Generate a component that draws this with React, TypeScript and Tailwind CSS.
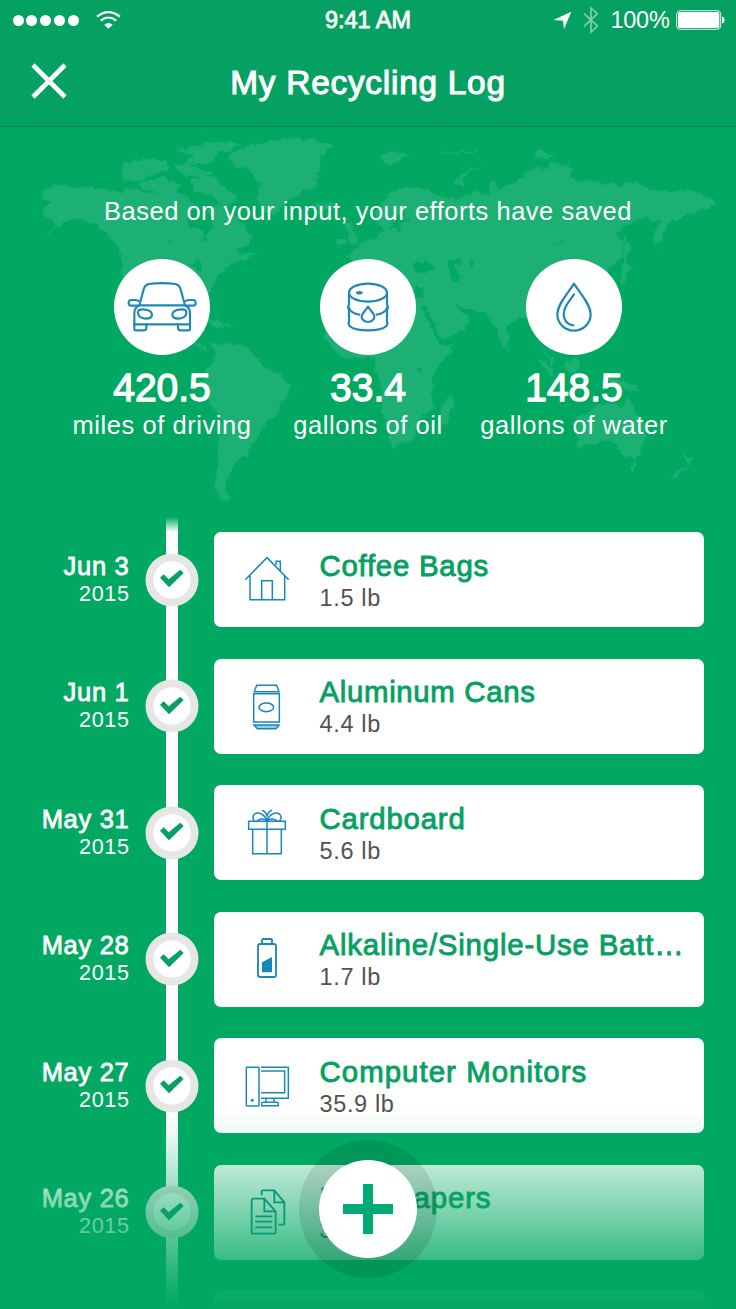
import type { ReactNode } from "react";

const FONT = "font-['Liberation_Sans',Arial,sans-serif]";

function WorldMap() {
  return (
    <svg className="pointer-events-none absolute inset-0" width="736" height="390" viewBox="0 127 736 390" aria-hidden="true">
      <defs>
        <filter id="coast" x="-5%" y="-5%" width="110%" height="110%">
          <feTurbulence type="fractalNoise" baseFrequency="0.12" numOctaves="3" seed="4" result="n" />
          <feDisplacementMap in="SourceGraphic" in2="n" scale="9" xChannelSelector="R" yChannelSelector="G" />
        </filter>
      </defs>
      <g filter="url(#coast)">
        <g transform="translate(20 130) scale(.33333)" fill="#1bb074">
          <path d="M75 180L120 163 180 172 240 178 300 185 330 175 400 190 440 182 480 190 505 205 530 225 520 245 495 265 505 290 545 300 550 335 562 330 570 290 580 262 555 240 600 225 650 260 690 320 690 345 640 365 715 370 680 385 640 400 600 430 575 470 570 500 540 520 500 540 480 620 545 645 565 662 520 650 400 600 310 480 305 380 270 320 230 285 180 262 140 275 70 325 110 285 80 265 65 235 90 215 60 205Z" />
          <path d="M305 100L360 85 440 95 445 125 400 130 370 150 310 155ZM350 160L430 140 480 165 470 188 400 186ZM455 100L510 105 580 125 560 145 490 135ZM510 150L570 140 615 165 650 200 625 235 595 222 575 195 520 182ZM470 60L560 40 650 35 670 45 600 70 560 105 500 100 520 75Z" />
          <path d="M620 75L700 45 800 25 880 30 940 50 905 80 890 130 890 170 850 185 800 210 765 260 735 245 710 210 720 160 690 120 640 105Z" />
          <path d="M880 215L930 218 940 235 900 248ZM970 285L990 275 1005 320 1017 340 985 348 990 310ZM955 325L975 320 975 340 958 345ZM560 570L600 575 640 590 600 592Z" />
          <path d="M580 640L620 640 680 650 720 690 730 715 780 730 815 765 790 810 780 855 735 880 715 920 690 950 685 975 655 985 640 1020 625 1040 615 1075 620 1100 635 1114 600 1108 583 1060 595 1000 598 930 605 870 565 810 550 770 555 730 580 690Z" />
          <path d="M510 402L540 395 550 415 530 425ZM445 325L460 345 450 340Z" fill="#01a862" />
        </g>
        <g transform="translate(360 130) scale(.33333)" fill="#1bb074">
          <path d="M-40 378L0 345 40 325 70 300 50 275 45 245 90 190 130 165 200 180 240 200 300 210 350 180 385 195 390 155 405 148 410 180 470 155 500 125 590 100 640 115 630 145 700 155 780 165 810 155 880 180 960 185 1000 180 1070 215 1050 235 1000 250 940 270 915 290 905 320 885 350 880 320 905 275 860 265 820 275 765 310 795 345 785 380 755 410 740 430 700 500 640 600 500 570 480 560 440 590 445 645 430 655 400 575 375 545 320 540 270 510 300 545 330 560 310 600 245 630 190 525 240 645 280 640 275 670 220 720 215 810 220 840 185 860 165 910 140 940 95 950 85 915 60 820 70 780 45 720 45 680 -40 685 -80 660 -105 620 -105 580 -60 500 0 400Z" />
          <path d="M270 800L278 825 260 880 245 885 245 840ZM535 680L560 700 585 735 575 742 550 715ZM610 700L650 680 665 700 650 730 625 732ZM560 660L580 690 575 710ZM740 735L780 745 835 782 800 782 760 765Z" />
          <path d="M645 880L650 860 690 845 720 820 760 815 785 835 800 800 825 840 855 890 858 920 840 960 830 985 795 980 770 945 740 930 690 945 648 950 650 920ZM810 1000L830 1002 822 1022ZM975 955L985 980 1005 985 985 1000 950 1045 935 1040 975 1005Z" />
          <path d="M793 320L807 340 802 400 817 410 800 420 793 465 780 472 788 420ZM60 75L100 65 150 75 110 95 80 108ZM285 160L300 130 375 105 330 125 305 150 310 168ZM515 75L545 60 585 75 560 88ZM440 640L455 660 445 670ZM235 64L290 66 360 58 360 66 290 72Z" />
          <path d="M155 400L190 390 225 410 215 425 170 425ZM262 395L290 385 300 400 285 410 300 440 295 458 275 450 265 420ZM325 392L342 392 340 408 325 408ZM165 470L195 470 190 500 165 500ZM172 715L188 715 186 732 172 732ZM580 350L615 320 612 330ZM85 300L100 275 130 235 140 240 125 270 150 275 125 282 120 305ZM183 520L200 530 245 632 236 634 205 575Z" fill="#01a862" />
        </g>
      </g>
    </svg>
  );
}

function StatIcon({ children }: { children: ReactNode }) {
  return (
    <div className="size-24 rounded-full bg-white">
      <svg className="size-24" viewBox="0 0 288 288" fill="none" stroke="#2088b5" strokeWidth="6.5" strokeLinecap="round" strokeLinejoin="round">
        {children}
      </svg>
    </div>
  );
}

const carIcon = (
  <>
    <path d="M76 139L90 88Q94 77 104 75Q145 70 184 75Q195 77 199 88L213 139Z" />
    <path d="M74 126Q70 123 62 123H52Q44 123 44 132Q44 140 51 140H72M215 126Q219 123 227 123H237Q245 123 245 132Q245 140 238 140H217" />
    <path d="M76 139Q61 146 61 162V196H228V162Q228 146 213 139" />
    <path d="M61 196V209Q61 214 66 214H89Q97 214 97 207V196M228 196V209Q228 214 223 214H200Q192 214 192 207V196" />
    <path d="M75 153Q84 149 100 153Q114 157 114 168Q112 179 96 179Q78 178 73 167Q70 157 75 153ZM214 153Q205 149 189 153Q175 157 175 168Q177 179 193 179Q211 178 216 167Q219 157 214 153Z" />
  </>
);

const oilIcon = (
  <>
    <ellipse cx="144" cy="101" rx="57" ry="27" />
    <ellipse cx="118" cy="101" rx="7" ry="2" />
    <path d="M87 103V136Q82 145 87 153V188Q84 194 88 200Q102 214 144 214Q186 214 200 200Q204 194 201 188V153Q206 145 201 136V103" />
    <path d="M86 146Q94 164 118 167M202 146Q194 164 170 167" />
    <path d="M144 143C138 153 125 164 125 173A19 16 0 0 0 163 173C163 164 150 153 144 143Z" />
  </>
);

const waterIcon = (
  <>
    <path d="M144 74C130 98 94 134 94 166A50 49 0 0 0 194 166C194 134 158 98 144 74Z" />
    <path d="M144 106C128 128 113 146 113 167Q115 196 142 199" />
  </>
);

const houseIcon = (
  <>
    <path d="M16 80L81 14L146 80M30 68V140H134V68M65 140V83H97V140M108 36V25H121V53" />
  </>
);

const canIcon = (
  <>
    <path d="M50 19H110L117 38H43ZM41 44H118V129H41Z" />
    <ellipse cx="79" cy="85" rx="22" ry="13" />
    <path d="M42 138H117L108 149H52Z" fill="#9dcbe0" />
  </>
);

const giftIcon = (
  <>
    <path d="M26 46H136V70H26ZM38 70V143H124V70M81 46V143" />
    <path d="M81 44C76 27 56 16 45 23C37 29 38 38 43 45M81 44C86 27 106 16 117 23C125 29 124 38 119 45" />
    <path d="M81 32C79 22 73 15 66 13M81 32C83 22 89 15 96 13M50 45Q66 33 81 44Q96 33 112 45" />
  </>
);

const batteryIcon = (
  <>
    <rect x="54" y="36" width="54" height="99" rx="7" strokeWidth="5.5" />
    <path d="M66 35V24Q66 21 70 21H92Q96 21 96 24V35" strokeWidth="5.5" />
    <path d="M66 91L96 75V121H66Z" fill="#1a87b9" stroke="none" />
  </>
);

const computerIcon = (
  <>
    <rect x="19" y="25" width="38" height="116" rx="2" />
    <circle cx="37" cy="124" r="4.5" fill="#1a87b9" stroke="none" />
    <path d="M63 25H145V118H63M63 36H134V101H63M78 120V129M102 120V129M65 140V133Q65 130 69 130H111Q115 130 115 133V140Z" />
  </>
);

const papersIcon = (
  <g stroke="#078b91" strokeWidth="5.5">
    <path d="M40 41H73L107 79V141Q107 146 102 146H40Q35 146 35 141V46Q35 41 40 41ZM73 41V79H107" />
    <path d="M65 31V20Q65 16 69 16H103L133 52V115Q133 119 129 119H115M103 16V52H133M46 94H97M46 110H97M46 127H97" />
  </g>
);

type Stat = { icon: ReactNode; value: string; label: string };
const stats: Stat[] = [
  { icon: carIcon, value: "420.5", label: "miles of driving" },
  { icon: oilIcon, value: "33.4", label: "gallons of oil" },
  { icon: waterIcon, value: "148.5", label: "gallons of water" },
];

type Entry = { date: string; title: string; weight: string; icon: ReactNode; tracking: string };
const entries: Entry[] = [
  { date: "Jun 3", title: "Coffee Bags", weight: "1.5 lb", icon: houseIcon, tracking: "tracking-[0.75px]" },
  { date: "Jun 1", title: "Aluminum Cans", weight: "4.4 lb", icon: canIcon, tracking: "tracking-[0.67px]" },
  { date: "May 31", title: "Cardboard", weight: "5.6 lb", icon: giftIcon, tracking: "tracking-[0.8px]" },
  { date: "May 28", title: "Alkaline/Single-Use Batt…", weight: "1.7 lb", icon: batteryIcon, tracking: "tracking-[0.81px]" },
  { date: "May 27", title: "Computer Monitors", weight: "35.9 lb", icon: computerIcon, tracking: "tracking-[1.05px]" },
  { date: "May 26", title: "Newspapers", weight: "3.2 lb", icon: papersIcon, tracking: "tracking-[0.85px]" },
];

function StatusBar() {
  return (
    <div className="grid h-10 grid-cols-3 items-center">
      <div className="flex items-center pl-[12.7px]">
        <div className="flex gap-[2.8px]">
          {[0, 1, 2, 3, 4].map((i) => (
            <span key={i} className="size-[11px] rounded-full bg-white" />
          ))}
        </div>
        <svg className="ml-[17px] mt-[-1px]" width="25" height="18" viewBox="0 0 75 54" fill="none" stroke="#fff" strokeWidth="6.5">
          <path d="M3 17Q37 -10 72 17M14 29Q37 10 61 29" />
          <path d="M25 41Q37 31 50 41L37 53Z" fill="#fff" stroke="none" />
        </svg>
      </div>
      <div className="text-center text-[23.5px] leading-10 [-webkit-text-stroke:0.8px]">9:41 AM</div>
      <div className="flex items-center justify-end pr-[10.5px]">
        <svg width="19" height="19" viewBox="0 0 57 57" fill="#fff">
          <path d="M1 27L55 2L33 54L30 29Z" />
        </svg>
        <svg className="ml-[11px]" width="16" height="28" viewBox="0 0 48 84" fill="none" stroke="#7fd0ab" strokeWidth="5">
          <path d="M3 22L43 60L24 78V6L43 23L3 61" />
        </svg>
        <span className="ml-[12px] text-[23.5px] leading-10 tracking-[-0.3px]">100%</span>
        <svg className="ml-[7px]" width="49" height="20" viewBox="0 0 147 60">
          <rect x="2" y="2" width="132" height="56" rx="10" fill="none" stroke="#d9f1e6" strokeWidth="3" />
          <rect x="6" y="6" width="124" height="48" rx="5" fill="#fff" />
          <path d="M138 19Q146 22 146 30Q146 38 138 41Z" fill="#fff" />
        </svg>
      </div>
    </div>
  );
}

function TimelineRow({ entry }: { entry: Entry }) {
  return (
    <li className="flex h-[95px] shrink-0 items-center">
      <div className="w-[129.5px] text-right text-white">
        <div className="text-[25.5px] leading-[28px] tracking-[0.7px] [-webkit-text-stroke:0.8px]">{entry.date}</div>
        <div className="text-[21.6px] leading-[28px] tracking-[0.6px]">2015</div>
      </div>
      <svg className="ml-[15.2px] shrink-0" width="54" height="54" viewBox="-1 -1 162 162">
        <circle cx="80" cy="80" r="79.5" fill="#e6e6e6" />
        <circle cx="80" cy="80" r="56" fill="#fff" />
      </svg>
      <div className="ml-[15.3px] flex h-full w-[490.5px] items-center rounded-[7px] bg-white pl-[26px]">
        <svg className="shrink-0" width="54" height="54" viewBox="0 0 162 162" fill="none" stroke="#1a87b9" strokeWidth="4.5">
          {entry.icon}
        </svg>
        <div className="ml-[25.5px] whitespace-nowrap pt-[4.6px]">
          <div className={`text-[29.4px] leading-[32px] text-[#07a063] [-webkit-text-stroke:0.9px] ${entry.tracking}`}>{entry.title}</div>
          <div className="text-[23.5px] leading-[32px] tracking-[0.65px] text-[#525252]">{entry.weight}</div>
        </div>
      </div>
    </li>
  );
}

export default function App() {
  return (
    <div className={`relative flex h-[1309px] w-[736px] flex-col overflow-hidden bg-[#01a862] text-white ${FONT}`}>
      <header className="h-[127px] shrink-0 border-b border-[#0a8453] bg-[#04a163]">
        <StatusBar />
        <div className="grid h-[86px] grid-cols-[100px_1fr_100px] items-center">
          <button aria-label="Close" className="ml-[31px] mt-[-5px] w-[36px]">
            <svg width="36" height="36" viewBox="0 0 36 36" stroke="#fff" strokeWidth="4.6">
              <path d="M2 2L34 34M34 2L2 34" />
            </svg>
          </button>
          <h1 className="text-center text-[33.4px] leading-[40px] tracking-[0.75px] [-webkit-text-stroke:1.1px]">My Recycling Log</h1>
        </div>
      </header>

      <section className="relative h-[405px] shrink-0 pt-[68.5px]">
        <WorldMap />
        <p className="relative text-center text-[25.5px] leading-[30px] tracking-[0.51px]">Based on your input, your efforts have saved</p>
        <div className="relative mx-auto mt-[33.5px] grid w-[618px] grid-cols-3">
          {stats.map((s) => (
            <div key={s.label} className="flex flex-col items-center whitespace-nowrap">
              <StatIcon>{s.icon}</StatIcon>
              <div className="mt-[15px] text-[39px] leading-[36px] [-webkit-text-stroke:1.3px]">{s.value}</div>
              <div className="text-[25.5px] leading-[38px] tracking-[0.55px]">{s.label}</div>
            </div>
          ))}
        </div>
      </section>

      <div className="relative h-[777px] shrink-0">
        <div className="absolute -top-[15px] bottom-0 left-[166px] w-3 bg-[linear-gradient(to_bottom,transparent,#fff_15px)]" />
        <ul className="relative flex flex-col gap-[31.5px]">
          {entries.map((e) => (
            <TimelineRow key={e.date} entry={e} />
          ))}
          <li className="ml-[214px] h-[95px] w-[490.5px] rounded-[7px] bg-white" />
        </ul>
        <div className="absolute inset-x-0 bottom-0 h-[200px] bg-[linear-gradient(to_bottom,rgba(1,168,98,0)_0px,rgba(1,168,98,0.07)_24px,rgba(1,168,98,0.25)_56px,rgba(1,168,98,0.78)_151px,rgba(1,168,98,0.95)_182px,rgba(1,168,98,1)_200px)]" />
        <div className="pointer-events-none absolute left-[144.5px] top-[20.3px] flex flex-col gap-[72.5px]">
          {entries.map((e) => (
            <svg key={e.date} width="54" height="54" viewBox="0 0 162 162" fill="#07a063">
              <path d="M45 77L56 67L71 82L106 53L116 63L72 106Z" />
            </svg>
          ))}
        </div>
      </div>

      <button aria-label="Add entry" className="absolute left-[299px] top-[1140px] flex size-[138px] items-center justify-center rounded-full bg-black/10">
        <span className="flex size-[98px] items-center justify-center rounded-full bg-white">
          <svg width="50" height="50" viewBox="0 0 50 50" stroke="#02ab75" strokeWidth="10">
            <path d="M25 0V50M0 25H50" />
          </svg>
        </span>
      </button>
    </div>
  );
}
